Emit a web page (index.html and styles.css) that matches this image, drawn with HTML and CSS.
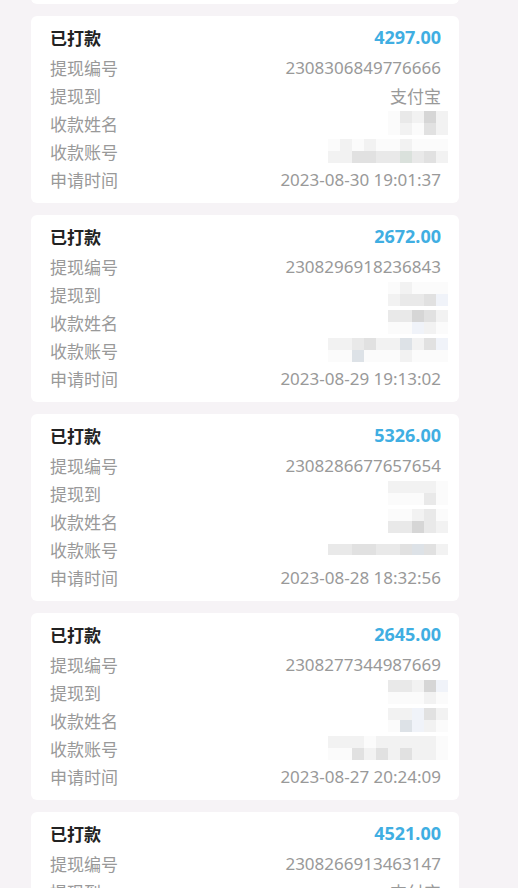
FILE: index.html
```html
<!DOCTYPE html>
<html lang="zh-CN">
<head>
<meta charset="UTF-8">
<meta name="viewport" content="width=device-width, initial-scale=1.0">
<title>提现记录</title>
<link rel="stylesheet" href="styles.css">
</head>
<body>

<div class="list">

  <!-- previous record, scrolled out of view: only its bottom edge shows -->
  <div class="card card-first"></div>

  <div class="card">
    <div class="head"><span class="status">已打款</span><span class="amount">4297.00</span></div>
    <div class="row"><span class="label">提现编号</span><span class="value">2308306849776666</span></div>
    <div class="row"><span class="label">提现到</span><span class="value">支付宝</span></div>
    <div class="row"><span class="label">收款姓名</span>
      <div class="mosaic short">
        <i class="m0"></i><i class="m2"></i><i class="m1"></i><i class="m4"></i><i class="m1"></i>
        <i class="m0"></i><i class="m1"></i><i class="m0"></i><i class="m3"></i><i class="m1"></i>
      </div>
    </div>
    <div class="row"><span class="label">收款账号</span>
      <div class="mosaic long">
        <i class="m0"></i><i class="m1"></i><i class="m0"></i><i class="m1"></i><i class="m0"></i><i class="m0"></i><i class="m1"></i><i class="m0"></i><i class="m0"></i><i class="m0"></i>
        <i class="m1"></i><i class="m1"></i><i class="m3"></i><i class="m3"></i><i class="m2"></i><i class="m2"></i><i class="m5"></i><i class="m2"></i><i class="m3"></i><i class="m1"></i>
      </div>
    </div>
    <div class="row"><span class="label">申请时间</span><span class="value">2023-08-30 19:01:37</span></div>
  </div>

  <div class="card">
    <div class="head"><span class="status">已打款</span><span class="amount">2672.00</span></div>
    <div class="row"><span class="label">提现编号</span><span class="value">2308296918236843</span></div>
    <div class="row"><span class="label">提现到</span>
      <div class="mosaic short">
        <i class="m0"></i><i class="m1"></i><i class="m0"></i><i class="m0"></i><i class="m0"></i>
        <i class="m1"></i><i class="m2"></i><i class="m2"></i><i class="m3"></i><i class="m6"></i>
      </div>
    </div>
    <div class="row"><span class="label">收款姓名</span>
      <div class="mosaic short">
        <i class="m2"></i><i class="m2"></i><i class="m4"></i><i class="m3"></i><i class="m1"></i>
        <i class="m0"></i><i class="m0"></i><i class="m6"></i><i class="m1"></i><i class="m0"></i>
      </div>
    </div>
    <div class="row"><span class="label">收款账号</span>
      <div class="mosaic long">
        <i class="m1"></i><i class="m1"></i><i class="m2"></i><i class="m3"></i><i class="m1"></i><i class="m1"></i><i class="m7"></i><i class="m1"></i><i class="m3"></i><i class="m6"></i>
        <i class="m0"></i><i class="m0"></i><i class="m7"></i><i class="m0"></i><i class="m0"></i><i class="m0"></i><i class="m1"></i><i class="m0"></i><i class="m0"></i><i class="m0"></i>
      </div>
    </div>
    <div class="row"><span class="label">申请时间</span><span class="value">2023-08-29 19:13:02</span></div>
  </div>

  <div class="card">
    <div class="head"><span class="status">已打款</span><span class="amount">5326.00</span></div>
    <div class="row"><span class="label">提现编号</span><span class="value">2308286677657654</span></div>
    <div class="row"><span class="label">提现到</span>
      <div class="mosaic short">
        <i class="m1"></i><i class="m1"></i><i class="m1"></i><i class="m1"></i><i class="m0"></i>
        <i class="m0"></i><i class="m0"></i><i class="m0"></i><i class="m2"></i><i class="m0"></i>
      </div>
    </div>
    <div class="row"><span class="label">收款姓名</span>
      <div class="mosaic short">
        <i class="m0"></i><i class="m0"></i><i class="m1"></i><i class="m2"></i><i class="m0"></i>
        <i class="m2"></i><i class="m2"></i><i class="m4"></i><i class="m2"></i><i class="m1"></i>
      </div>
    </div>
    <div class="row"><span class="label">收款账号</span>
      <div class="mosaic long thin">
        <i class="m2"></i><i class="m2"></i><i class="m3"></i><i class="m3"></i><i class="m2"></i><i class="m2"></i><i class="m3"></i><i class="m7"></i><i class="m3"></i><i class="m1"></i>
      </div>
    </div>
    <div class="row"><span class="label">申请时间</span><span class="value">2023-08-28 18:32:56</span></div>
  </div>

  <div class="card">
    <div class="head"><span class="status">已打款</span><span class="amount">2645.00</span></div>
    <div class="row"><span class="label">提现编号</span><span class="value">2308277344987669</span></div>
    <div class="row"><span class="label">提现到</span>
      <div class="mosaic short">
        <i class="m2"></i><i class="m2"></i><i class="m1"></i><i class="m4"></i><i class="m6"></i>
        <i class="m0"></i><i class="m0"></i><i class="m0"></i><i class="m1"></i><i class="m0"></i>
      </div>
    </div>
    <div class="row"><span class="label">收款姓名</span>
      <div class="mosaic short">
        <i class="m1"></i><i class="m1"></i><i class="m6"></i><i class="m3"></i><i class="m1"></i>
        <i class="m0"></i><i class="m7"></i><i class="m6"></i><i class="m1"></i><i class="m0"></i>
      </div>
    </div>
    <div class="row"><span class="label">收款账号</span>
      <div class="mosaic long">
        <i class="m1"></i><i class="m1"></i><i class="m1"></i><i class="m0"></i><i class="m1"></i><i class="m1"></i><i class="m1"></i><i class="m1"></i><i class="m1"></i><i class="m0"></i>
        <i class="m0"></i><i class="m0"></i><i class="m3"></i><i class="m1"></i><i class="m3"></i><i class="m1"></i><i class="m3"></i><i class="m1"></i><i class="m1"></i><i class="m0"></i>
      </div>
    </div>
    <div class="row"><span class="label">申请时间</span><span class="value">2023-08-27 20:24:09</span></div>
  </div>

  <div class="card">
    <div class="head"><span class="status">已打款</span><span class="amount">4521.00</span></div>
    <div class="row"><span class="label">提现编号</span><span class="value">2308266913463147</span></div>
    <div class="row"><span class="label">提现到</span><span class="value">支付宝</span></div>
  </div>

</div>

</body>
</html>
```

FILE: styles.css
```css
body {
  margin: 0;
  background-color: #f6f3f6;
  font-family: "Noto Sans", "Noto Sans CJK SC", sans-serif;
  overflow: hidden;
}
.list {
  width: 428px;
  margin-left: 31px;
  display: flex;
  flex-direction: column;
  gap: 12px;
}
.card {
  background-color: #fff;
  border-radius: 6px;
  padding: 7px 18px 10px 19px;
  height: 187px;
  box-sizing: border-box;
  flex-shrink: 0;
}
.card-first {
  margin-top: -183px;
}
.head {
  display: flex;
  justify-content: space-between;
  align-items: center;
  height: 28px;
  margin-bottom: 2px;
}
.status {
  font-size: 17px;
  font-weight: bold;
  color: #222;
}
.amount {
  font-size: 18px;
  font-weight: bold;
  color: #40aee2;
}
.row {
  display: flex;
  justify-content: space-between;
  align-items: center;
  height: 28px;
  font-size: 17px;
  color: #999;
}
.mosaic {
  display: grid;
  grid-template-columns: repeat(5, 12px);
  grid-auto-rows: 12px;
  margin-right: -7px;
  opacity: 0.85;
}
.mosaic.long {
  grid-template-columns: repeat(10, 12px);
}
.mosaic.thin {
  grid-auto-rows: 11px;
}
.mosaic i {
  display: block;
}
.m0 { background-color: #fbfbfb; }
.m1 { background-color: #f0f0f0; }
.m2 { background-color: #e6e6e6; }
.m3 { background-color: #dcdcdc; }
.m4 { background-color: #cfcfcf; }
.m5 { background-color: #d4dcd6; }
.m6 { background-color: #eef1f8; }
.m7 { background-color: #d8dde3; }
```
